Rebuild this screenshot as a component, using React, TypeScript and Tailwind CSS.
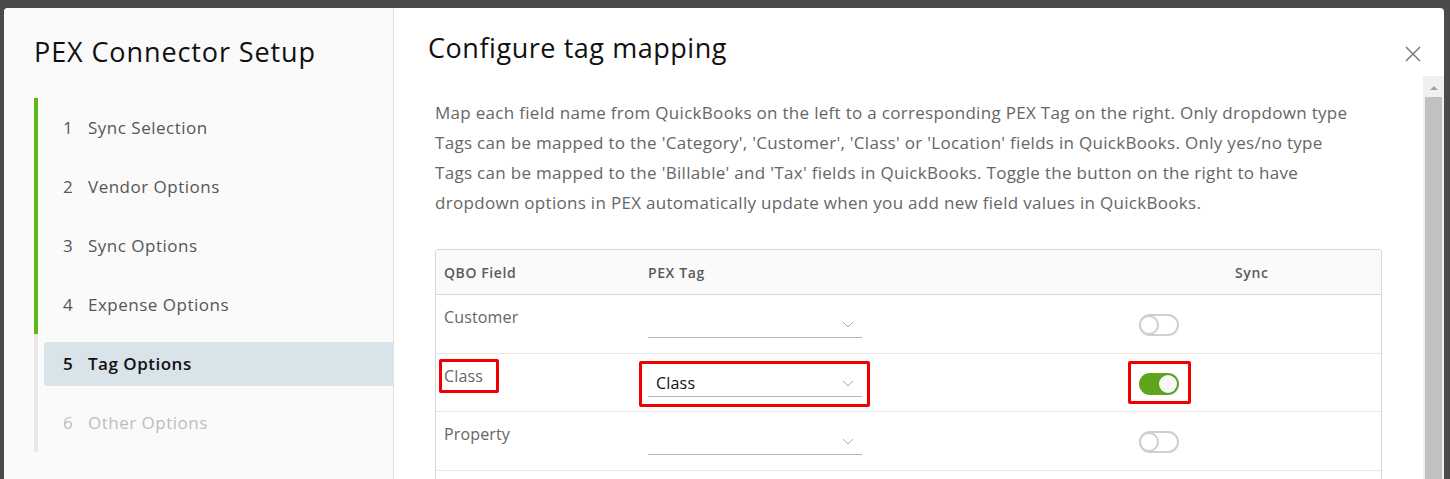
import React from "react";

const steps = [
  { n: 1, label: "Sync Selection", state: "done" },
  { n: 2, label: "Vendor Options", state: "done" },
  { n: 3, label: "Sync Options", state: "done" },
  { n: 4, label: "Expense Options", state: "done" },
  { n: 5, label: "Tag Options", state: "active" },
  { n: 6, label: "Other Options", state: "todo" },
];

const rows = [
  { field: "Customer", tag: "", sync: false, marked: false },
  { field: "Class", tag: "Class", sync: true, marked: true },
  { field: "Property", tag: "", sync: false, marked: false },
];

function Chevron() {
  return (
    <svg width="12" height="7" viewBox="0 0 12 7" className="shrink-0">
      <path d="M1 1l5 5 5-5" fill="none" stroke="#a8a8a8" strokeWidth="1" />
    </svg>
  );
}

function Toggle({ on }: { on: boolean }) {
  return on ? (
    <div className="flex h-[22px] w-[40px] items-center justify-end rounded-full bg-[#5ea41f] pr-[2px]">
      <div className="h-[18px] w-[18px] rounded-full bg-[#f7f7f7]" />
    </div>
  ) : (
    <div className="flex h-[22px] w-[40px] items-center rounded-full border-2 border-[#cfcfcf] bg-white">
      <div className="h-[20px] w-[20px] -ml-[2px] rounded-full border-2 border-[#cfcfcf] bg-white" />
    </div>
  );
}

export default function App() {
  return (
    <div
      className="h-[479px] w-[1450px] overflow-hidden bg-[#4b4b4b] pl-[4px] pr-[6px] pt-[8px]"
      style={{ fontFamily: "'Open Sans', Lato, sans-serif" }}
    >
      <div className="flex h-[471px] overflow-hidden rounded-t-[4px] bg-white">
        {/* wizard steps */}
        <aside className="w-[390px] shrink-0 border-r border-[#e2e2e2] bg-[#fafafa] pl-[30px] pt-[28px]">
          <h1 className="text-[27px] leading-[32px] tracking-[0.9px] text-[#111]">PEX Connector Setup</h1>
          <nav className="mt-[30px]">
            {steps.map((s) => (
              <div
                key={s.n}
                className={
                  "flex h-[59px] items-center border-l-4 " +
                  (s.state === "done" ? "border-[#5eb715]" : "border-[#e8e8e8]")
                }
              >
                <div
                  className={
                    "ml-[6px] flex h-[44px] flex-1 items-center rounded-l-[3px] pl-[19px] text-[17px] tracking-[0.5px] " +
                    (s.state === "active"
                      ? "bg-[#d9e3ea] font-semibold text-[#111]"
                      : s.state === "done"
                        ? "text-[#565656]"
                        : "text-[#bdbdbd]")
                  }
                >
                  <span className="w-[25px]">{s.n}</span>
                  <span>{s.label}</span>
                </div>
              </div>
            ))}
          </nav>
        </aside>

        {/* content */}
        <section className="flex min-w-0 flex-1 flex-col">
          <div className="flex h-[68px] shrink-0 items-start justify-between pl-[34px] pr-[23px] pt-[24px]">
            <h2 className="text-[27px] leading-[32px] tracking-[0.55px] text-[#111]">Configure tag mapping</h2>
            <svg width="16" height="16" viewBox="0 0 16 16" className="mt-[14px]">
              <path d="M1 1l14 14M15 1L1 15" stroke="#7a7a7a" strokeWidth="1.5" />
            </svg>
          </div>
          <div className="flex min-h-0 flex-1">
            <div className="min-w-0 flex-1 pl-[41px] pr-[41px] pt-[22px]">
              <p className="whitespace-nowrap text-[17px] leading-[30px] tracking-[0.3px] text-[#666]">
                Map each field name from QuickBooks on the left to a corresponding PEX Tag on the right. Only dropdown type
                <br />
                Tags can be mapped to the 'Category', 'Customer', 'Class' or 'Location' fields in QuickBooks. Only yes/no type
                <br />
                Tags can be mapped to the 'Billable' and 'Tax' fields in QuickBooks. Toggle the button on the right to have
                <br />
                dropdown options in PEX automatically update when you add new field values in QuickBooks.
              </p>
              <div className="mt-[31px] rounded-[3px] border border-[#d7d7d7]">
                <div className="flex h-[45px] items-center rounded-t-[3px] border-b border-[#d7d7d7] bg-[#fafafa] text-[14px] font-semibold tracking-[0.6px] text-[#5a5a5a]">
                  <div className="w-[204px] pl-[8px]">QBO Field</div>
                  <div className="w-[489px] pl-[8px]">PEX Tag</div>
                  <div className="flex-1 pl-[106px]">Sync</div>
                </div>
                {rows.map((r) => (
                  <div key={r.field} className="relative flex h-[58.5px] border-b border-[#e6e6e6]">
                    <div className="relative w-[204px] pl-[8px] pt-[12px] text-[16px] leading-[20px] tracking-[0.15px] text-[#666]">
                      {r.field}
                      {r.marked && (
                        <div className="absolute left-[3px] top-[5px] h-[34px] w-[60px] rounded-[2px] border-[3px] border-[#f00000]" />
                      )}
                    </div>
                    <div className="relative w-[489px] pl-[8px] pt-[17px]">
                      <div className="flex h-[26px] w-[214px] items-center justify-between border-b border-[#b3b3b3] pl-[8px] pr-[8px]">
                        <span className="text-[16px] tracking-[0.2px] text-[#111]">{r.tag}</span>
                        <Chevron />
                      </div>
                      {r.marked && (
                        <div className="absolute -left-[1px] top-[7px] h-[46px] w-[231px] rounded-[2px] border-[3px] border-[#f00000]" />
                      )}
                    </div>
                    <div className="relative flex-1 pl-[10px] pt-[19px]">
                      <Toggle on={r.sync} />
                      {r.marked && (
                        <div className="absolute -left-[1px] top-[7px] h-[43px] w-[63px] rounded-[2px] border-[3px] border-[#f00000]" />
                      )}
                    </div>
                  </div>
                ))}
                <div className="h-[20px]" />
              </div>
            </div>
            {/* scrollbar */}
            <div className="flex w-[21px] shrink-0 flex-col items-center bg-[#f0f0f0] pt-[10px]">
              <div className="h-0 w-0 border-x-[4px] border-b-[4px] border-x-transparent border-b-[#a3a3a3]" />
              <div className="mt-[7px] w-[17px] flex-1 bg-[#c1c1c1]" />
            </div>
          </div>
        </section>
      </div>
    </div>
  );
}
